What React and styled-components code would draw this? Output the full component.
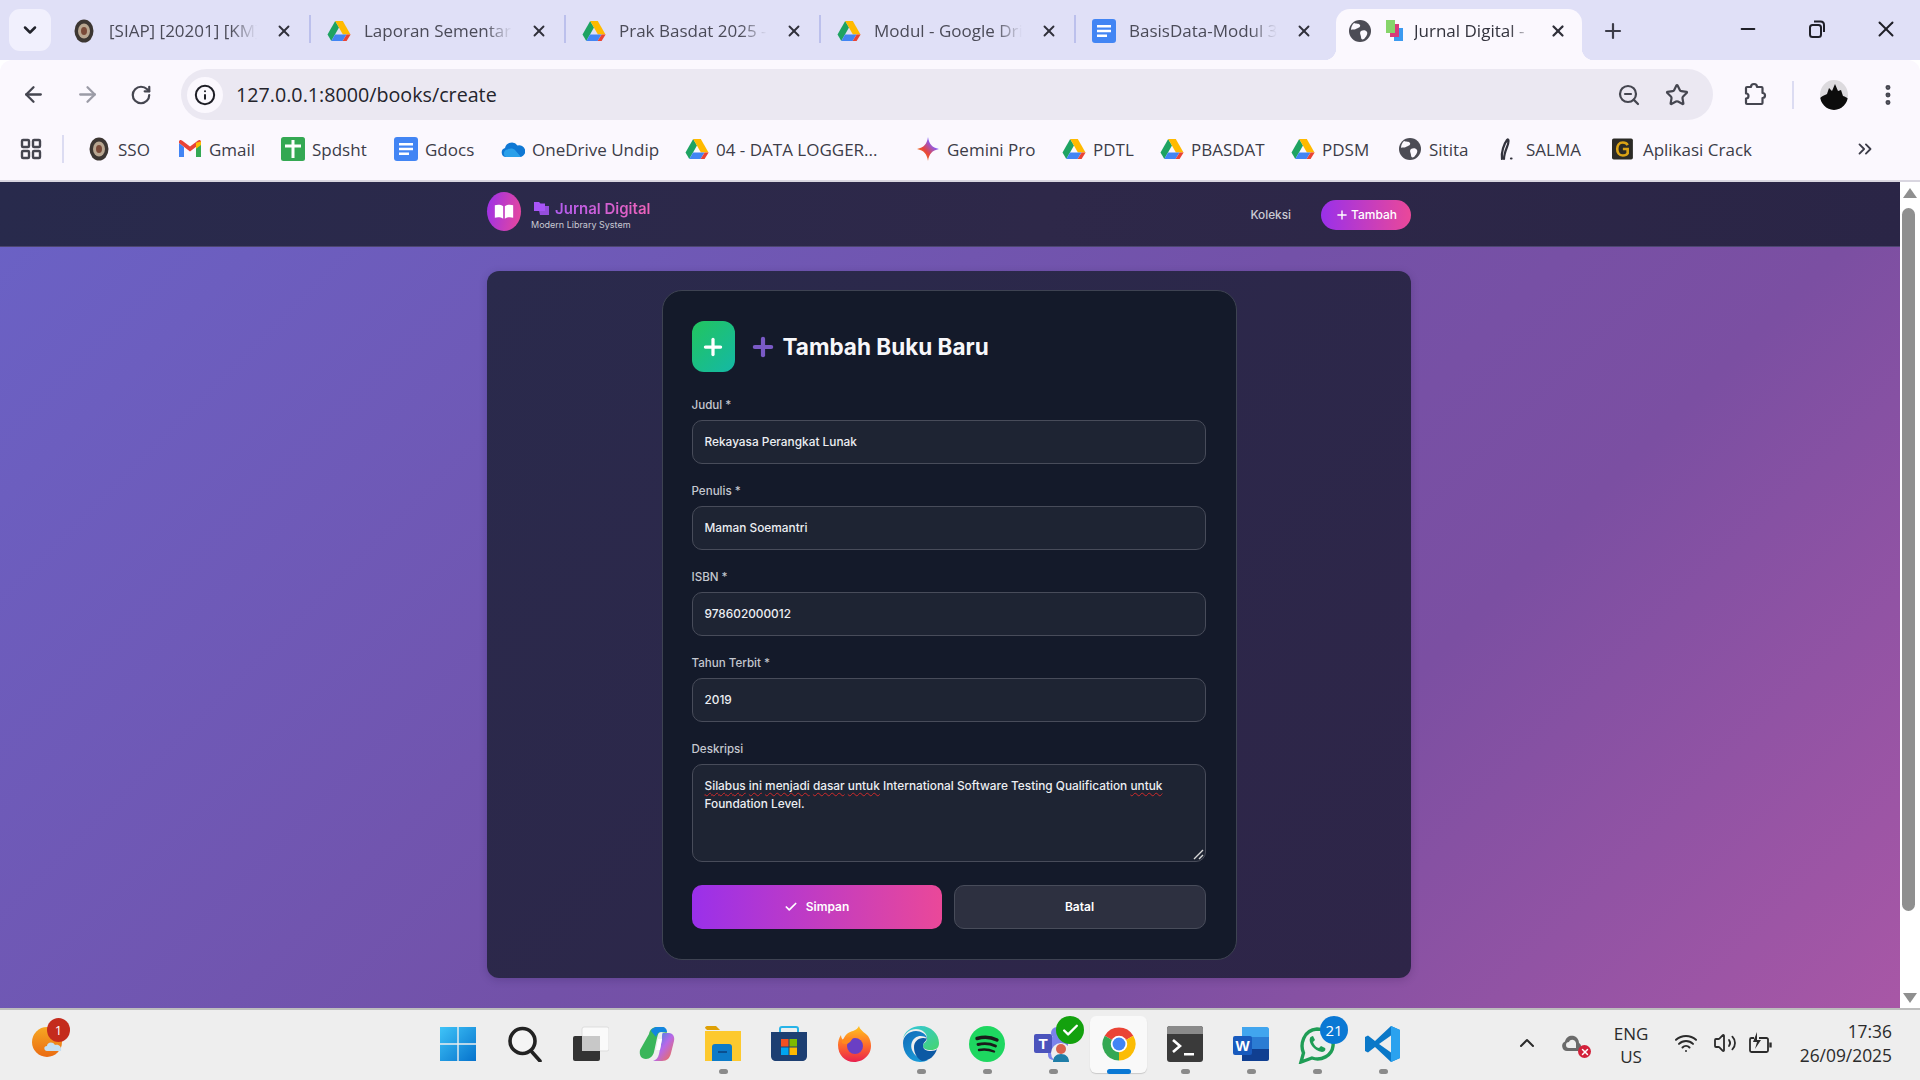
import React from 'react';
import styled, { createGlobalStyle } from 'styled-components';
import {
	ArrowLeft, ArrowRight, RotateCw, Info, ZoomOut, Star, EllipsisVertical,
	LayoutGrid, ChevronDown, ChevronUp, ChevronsRight, X, Plus, Minus, Check,
	Wifi, Volume2,
} from 'lucide-react';

const GlobalStyle = createGlobalStyle`
	html, body { margin: 0; padding: 0; }
	body { width: 1920px; height: 1080px; overflow: hidden; font-family: Inter, 'Liberation Sans', sans-serif; }
	* { box-sizing: border-box; }
`;

const chromeFont = `'Open Sans', 'Noto Sans', sans-serif`;

const Screen = styled.div`
	width: 1920px;
	height: 1080px;
	display: flex;
	flex-direction: column;
	overflow: hidden;
`;

/* browser chrome */
const TabStrip = styled.div`
	height: 60px;
	flex: none;
	display: flex;
	align-items: flex-end;
	padding-left: 9px;
	background: #e0e0f7;
`;
const TabListButton = styled.div`
	width: 42px;
	height: 42px;
	margin: 0 5px 9px 0;
	border-radius: 11px;
	background: #f1f0fd;
	display: flex;
	align-items: center;
	justify-content: center;
	color: #22232b;
`;
const Tab = styled.div`
	position: relative;
	width: 255px;
	height: 51px;
	padding: 0 18px 8px 16px;
	display: flex;
	align-items: center;
	font-family: ${chromeFont};
	font-size: 17px;
	color: #4b4b58;
	&::after {
		content: '';
		position: absolute;
		right: 0;
		top: 6px;
		height: 28px;
		width: 2px;
		background: ${(p) => (p.$sep ? '#bcc0ec' : 'transparent')};
	}
`;
const ActiveTab = styled.div`
	position: relative;
	width: 246px;
	height: 51px;
	margin-left: 5px;
	padding: 0 15px 8px 12px;
	display: flex;
	align-items: center;
	border-radius: 14px 14px 0 0;
	background: #fbf8fe;
	font-family: ${chromeFont};
	font-size: 17px;
	color: #33333d;
	&::before, &::after {
		content: '';
		position: absolute;
		bottom: 0;
		width: 12px;
		height: 12px;
	}
	&::before { left: -12px; background: radial-gradient(circle at 0 0, transparent 12px, #fbf8fe 12.5px); }
	&::after { right: -12px; background: radial-gradient(circle at 100% 0, transparent 12px, #fbf8fe 12.5px); }
`;
const TabTitle = styled.span`
	flex: 1;
	min-width: 0;
	margin-left: ${(p) => p.$gap || 13}px;
	white-space: nowrap;
	overflow: hidden;
	-webkit-mask-image: linear-gradient(90deg, #000 82%, transparent 100%);
	mask-image: linear-gradient(90deg, #000 82%, transparent 100%);
`;
const TabFavicon = styled.span`
	flex: none;
	display: flex;
	margin-right: ${(p) => p.$mr || 0}px;
`;
const TabClose = styled(X)`
	flex: none;
	margin-left: 18px;
	color: #30303a;
`;
const NewTab = styled.div`
	margin: 0 0 17px 19px;
	display: flex;
	color: #3c3c48;
`;
const WindowButtons = styled.div`
	margin-left: auto;
	display: flex;
	align-items: center;
	height: 100%;
	padding-bottom: 2px;
	color: #1f1f27;
`;
const WindowButton = styled.div`
	width: 69px;
	display: flex;
	justify-content: center;
`;

const Toolbar = styled.div`
	height: 60px;
	flex: none;
	display: flex;
	align-items: center;
	padding: 9px 0 0 6px;
	background: #fbf8fe;
	border-radius: 12px 12px 0 0;
`;
const NavIcon = styled.div`
	width: 54px;
	display: flex;
	justify-content: center;
	color: ${(p) => (p.$off ? '#9b9ba6' : '#454650')};
`;
const Omnibox = styled.div`
	width: 1532px;
	height: 51px;
	margin-left: 13px;
	padding: 0 12px 0 6px;
	display: flex;
	align-items: center;
	border-radius: 26px;
	background: #ebe8f2;
`;
const InfoChip = styled.div`
	width: 36px;
	height: 36px;
	border-radius: 50%;
	background: #fbf8fe;
	display: flex;
	align-items: center;
	justify-content: center;
	color: #1e1e26;
`;
const UrlText = styled.span`
	margin-left: 13px;
	flex: 1;
	font-family: ${chromeFont};
	font-size: 19.7px;
	color: #24242c;
`;
const OmniIcon = styled.div`
	width: 48px;
	display: flex;
	justify-content: center;
	color: #454650;
`;
const ExtensionSlot = styled(OmniIcon)`
	margin-left: 17px;
`;
const MenuSlot = styled(OmniIcon)`
	margin-left: 15px;
`;
const ToolDivider = styled.div`
	width: 2px;
	height: 28px;
	margin: 0 25px 0 14px;
	background: #dcdcf2;
`;

const BookmarkBar = styled.div`
	height: 62px;
	flex: none;
	display: flex;
	align-items: center;
	padding: 0 0 2px 19px;
	background: #fbf8fe;
	border-bottom: 2px solid #d9d6e0;
	font-family: ${chromeFont};
	font-size: 17px;
	color: #3c3c48;
`;
const BarDivider = styled.div`
	width: 2px;
	height: 28px;
	margin: 0 23px 0 19px;
	background: #dcdcf2;
`;
const Bookmark = styled.div`
	display: flex;
	align-items: center;
	gap: ${(p) => p.$gap || 7}px;
	width: ${(p) => p.$w}px;
	white-space: nowrap;
`;
const OverflowMark = styled.div`
	margin-left: auto;
	margin-right: 44px;
	display: flex;
	color: #3c3c48;
`;

/* page */
const Viewport = styled.div`
	height: 826px;
	flex: none;
	display: flex;
`;
const Page = styled.div`
	width: 1900px;
	background: linear-gradient(135deg, #6a62c6 0%, #7351a8 50%, #7b4fa2 70%, #a857a6 100%);
	overflow: hidden;
`;
const Scrollbar = styled.div`
	position: relative;
	width: 20px;
	background: #fff;
	padding-top: 26px;
`;
const ScrollArrow = styled.div`
	position: absolute;
	left: 3px;
	${(p) => (p.$down ? 'bottom: 5px;' : 'top: 6px;')}
	width: 0;
	height: 0;
	border-left: 7px solid transparent;
	border-right: 7px solid transparent;
	${(p) => (p.$down ? 'border-top: 10px solid #8f8f8f;' : 'border-bottom: 10px solid #8f8f8f;')}
`;
const ScrollThumb = styled.div`
	width: 13px;
	height: 703px;
	margin-left: 2px;
	border-radius: 7px;
	background: #8f8f8f;
`;
const NavBar = styled.header`
	height: 65px;
	background: linear-gradient(100deg, #282a4c 0%, #2e2849 55%, #2a2546 100%);
	border-bottom: 1px solid #4c4670;
`;
const Container = styled.div`
	width: 924px;
	margin-left: 487px;
`;
const NavInner = styled(Container)`
	display: flex;
	justify-content: space-between;
	padding-top: 10px;
`;
const Brand = styled.div`
	display: flex;
	gap: 10px;
`;
const LogoBadge = styled.div`
	width: 34px;
	height: 39px;
	border-radius: 50%;
	background: linear-gradient(100deg, #9a30ea, #ea4899);
	display: flex;
	align-items: center;
	justify-content: center;
`;
const BrandText = styled.div`
	display: flex;
	flex-direction: column;
	padding-top: 7px;
`;
const BrandTitle = styled.div`
	display: flex;
	align-items: center;
	gap: 6px;
	margin-left: 3px;
	height: 18px;
	font-size: 15px;
	font-weight: 600;
	span {
		background: linear-gradient(90deg, #b25cf0, #ee62b8);
		-webkit-background-clip: text;
		background-clip: text;
		color: transparent;
	}
`;
const BrandSub = styled.div`
	margin-top: 2px;
	font-size: 9px;
	color: #c9c9d4;
`;
const NavLinks = styled.nav`
	display: flex;
	align-items: center;
	gap: 30px;
	height: 30px;
	margin-top: 8px;
`;
const NavLink = styled.span`
	font-size: 11.8px;
	font-weight: 500;
	color: #cbcbd4;
`;
const AddPill = styled.div`
	width: 90px;
	height: 30px;
	padding-bottom: 1px;
	border-radius: 15px;
	background: linear-gradient(90deg, #9a30ea, #ea4899);
	display: flex;
	align-items: center;
	justify-content: center;
	gap: 2px;
	font-size: 12px;
	font-weight: 500;
	color: #fff;
`;
const Panel = styled(Container)`
	margin-top: 24px;
	height: 707px;
	padding-top: 19px;
	border-radius: 12px;
	background: linear-gradient(135deg, #2a2a4c 0%, #2e2548 100%);
	box-shadow: 0 2px 8px rgba(20, 10, 50, 0.18);
`;
const Card = styled.div`
	width: 575px;
	height: 670px;
	margin: 0 auto;
	padding: 30px 30px 0 29px;
	border: 1px solid #3e4352;
	border-radius: 20px;
	background: #141a2a;
`;
const CardHead = styled.div`
	display: flex;
	align-items: center;
	margin-bottom: 25px;
`;
const HeadIcon = styled.div`
	width: 43px;
	height: 51px;
	border-radius: 12px;
	background: linear-gradient(135deg, #22c55e, #14b8a6);
	display: flex;
	align-items: center;
	justify-content: center;
	color: #fff;
`;
const HeadPlus = styled(Plus)`
	margin: 0 6px 0 14px;
	color: #7a5ac6;
`;
const HeadTitle = styled.h1`
	margin: 0;
	font-size: 22.5px;
	font-weight: 700;
	color: #f7f7fa;
`;
const Field = styled.div`
	margin-bottom: 19px;
`;
const Label = styled.label`
	display: block;
	height: 16px;
	margin-bottom: 7px;
	font-size: 11.6px;
	font-weight: 500;
	line-height: 16px;
	color: #c4c7cf;
`;
const TextInput = styled.div`
	height: 44px;
	padding: 0 12px 1px;
	display: flex;
	align-items: center;
	border: 1px solid #484c5a;
	border-radius: 10px;
	background: #1e2433;
	font-size: 11.85px;
	font-weight: 500;
	color: #eceef2;
`;
const TextArea = styled.div`
	position: relative;
	height: 98px;
	padding: 12px 12px;
	border: 1px solid #484c5a;
	border-radius: 10px;
	background: #1e2433;
	font-size: 11.85px;
	font-weight: 500;
	line-height: 18px;
	color: #eceef2;
`;
const Misspelled = styled.span`
	text-decoration: underline wavy #d02a2a 1px;
	text-underline-offset: 2px;
`;
const ResizeGrip = styled.svg`
	position: absolute;
	right: 1px;
	bottom: 1px;
`;
const ButtonRow = styled.div`
	display: flex;
	gap: 12px;
	margin-top: 23px;
`;
const SaveButton = styled.div`
	flex: 1;
	height: 44px;
	padding-bottom: 1px;
	border-radius: 10px;
	background: linear-gradient(90deg, #9a30ea, #ea4899);
	display: flex;
	align-items: center;
	justify-content: center;
	gap: 8px;
	font-size: 12px;
	font-weight: 600;
	color: #fff;
`;
const CancelButton = styled.div`
	flex: 1;
	height: 44px;
	padding-bottom: 1px;
	border: 1px solid #484c5a;
	border-radius: 10px;
	background: #2d3040;
	display: flex;
	align-items: center;
	justify-content: center;
	font-size: 12px;
	font-weight: 600;
	color: #fff;
`;

/* taskbar */
const Taskbar = styled.footer`
	height: 72px;
	flex: none;
	display: flex;
	align-items: flex-start;
	background: #eeeeee;
	border-top: 2px solid #bdbdbd;
	font-family: ${chromeFont};
	color: #2b2b2b;
`;
const WeatherSlot = styled.div`
	position: relative;
	width: 424px;
	height: 70px;
	padding: 16px 0 0 31px;
`;
const WeatherBadge = styled.div`
	position: absolute;
	left: 47px;
	top: 8px;
	width: 23px;
	height: 24px;
	border-radius: 50%;
	background: #c42b1c;
	color: #fff;
	font-size: 13px;
	line-height: 24px;
	text-align: center;
`;
const Apps = styled.div`
	display: flex;
`;
const AppCell = styled.div`
	position: relative;
	width: ${(p) => p.$w}px;
	height: 70px;
	display: flex;
	justify-content: center;
	padding-top: 16px;
	&::before {
		content: '';
		display: ${(p) => (p.$active ? 'block' : 'none')};
		position: absolute;
		left: 4px;
		right: 5px;
		top: 6px;
		height: 57px;
		border-radius: 6px;
		background: #f9f9f9;
		box-shadow: 0 1px 1px #c9c9c9;
	}
	svg { position: relative; }
`;
const RunDot = styled.div`
	position: absolute;
	bottom: 6px;
	left: 50%;
	width: ${(p) => (p.$active ? '24px' : '9px')};
	height: 5px;
	margin-left: ${(p) => (p.$active ? '-12px' : '-4px')};
	border-radius: 3px;
	background: ${(p) => (p.$active ? '#0a78d4' : '#8a8a8a')};
`;
const AppBadge = styled.div`
	position: absolute;
	top: 6px;
	right: ${(p) => p.$r}px;
	width: 28px;
	height: 28px;
	border-radius: 50%;
	background: ${(p) => p.$bg};
	color: #fff;
	font-size: 15px;
	line-height: 28px;
	text-align: center;
	display: flex;
	align-items: center;
	justify-content: center;
`;
const Tray = styled.div`
	margin-left: 93px;
	height: 66px;
	display: flex;
	align-items: center;
`;
const TrayItem = styled.div`
	position: relative;
	width: ${(p) => p.$w}px;
	display: flex;
	justify-content: center;
	text-align: center;
	font-size: 17px;
	line-height: 23px;
`;
const LangItem = styled(TrayItem)`
	padding-top: 3px;
`;
const CloudX = styled.div`
	position: absolute;
	right: 10px;
	bottom: -3px;
	width: 13px;
	height: 13px;
	border-radius: 50%;
	background: #d3213a;
	color: #fff;
	display: flex;
	align-items: center;
	justify-content: center;
`;
const Clock = styled.div`
	width: 100px;
	margin-left: 9px;
	text-align: right;
	font-size: 17.4px;
	line-height: 24px;
`;

/* drawn icons */
const Drive = ({ s = 24 }) => (
	<svg width={s} height={s} viewBox="0 0 24 24">
		<path d="M8.2 2 0.5 15.5 4.3 22 12 8.5z" fill="#1ea362" />
		<path d="M8.2 2h7.6l7.7 13.5h-7.6z" fill="#ffba00" />
		<path d="M4.3 22h11.3l3.9-6.5H8z" fill="#4285f4" />
		<path d="M15.6 22h4l4-6.5h-4z" fill="#ea4335" />
	</svg>
);
const Docs = ({ s = 24 }) => (
	<svg width={s} height={s} viewBox="0 0 24 24">
		<rect x="0" y="0" width="24" height="24" rx="3" fill="#4285f4" />
		<path d="M5 6h14v2.600H5zM5 10.700h14v2.600H5zM5 15.400h10v2.600H5z" fill="#fff" />
	</svg>
);
const Sheets = ({ s = 24 }) => (
	<svg width={s} height={s} viewBox="0 0 24 24">
		<rect x="0" y="0" width="24" height="24" rx="2.500" fill="#34a853" />
		<path d="M4 7.500h6.500V3h3v4.500H20v3h-6.500V21h-3V10.500H4z" fill="#fff" />
	</svg>
);
const Gmail = ({ s = 24 }) => (
	<svg width={s} height={s} viewBox="0 0 24 24">
		<path d="M1 6v14h5V10z" fill="#4285f4" />
		<path d="M23 6v14h-5V10z" fill="#34a853" />
		<path d="M1 6l11 8.5L23 6v-1.500c0-1.500-2-2-3-1l-8 6-8-6c-1-1-3-.5-3 1z" fill="#ea4335" />
		<path d="M18 5.700 23 4.500V8l-5 3.800z" fill="#fbbc04" />
	</svg>
);
const OneDrive = ({ s = 24 }) => (
	<svg width={s} height={s} viewBox="0 0 24 24">
		<path d="M5 20a4.600 4.600 0 0 1-1-9A7 7 0 0 1 16.500 8.500 5.500 5.500 0 0 1 20 20z" fill="#0f78d4" />
		<path d="M5 20a4 4 0 0 1 1.500-7.500C9 11 12 11 14 13l6 7z" fill="#2aa0ea" />
	</svg>
);
const Gemini = ({ s = 24 }) => (
	<svg width={s} height={s} viewBox="0 0 24 24">
		<defs>
			<linearGradient id="gem" x1="0" y1="1" x2="1" y2="0">
				<stop offset="0" stopColor="#f5b400" />
				<stop offset="0.4" stopColor="#e8453c" />
				<stop offset="0.7" stopColor="#8a5cf0" />
				<stop offset="1" stopColor="#2f8cf5" />
			</linearGradient>
		</defs>
		<path d="M12 0c1 7 4 10.500 11 12-7 1.500-10 5-11 12-1-7-4-10.500-11-12 7-1.500 10-5 11-12z" fill="url(#gem)" />
	</svg>
);
const GlobeDark = ({ s = 24 }) => (
	<svg width={s} height={s} viewBox="0 0 24 24">
		<circle cx="12" cy="12" r="11" fill="#4c4c55" />
		<path d="M6 4c2 1 5 0 6 2s-2 3-4 4-4 0-5 1c0-3 1-5 3-7zM13 12c2-1 5-1 6 1s-1 5-3 7c-2 1-3 0-3-2s-2-4 0-6z" fill="#fbf8fe" />
	</svg>
);
const Seal = ({ s = 24 }) => (
	<svg width={s} height={s} viewBox="0 0 24 24">
		<ellipse cx="12" cy="12" rx="9.500" ry="11.500" fill="#3c3632" />
		<ellipse cx="12" cy="12" rx="6" ry="7.500" fill="#b8a690" />
		<ellipse cx="12" cy="12" rx="3" ry="4" fill="#7a4a38" />
	</svg>
);
const Salma = ({ s = 24 }) => (
	<svg width={s} height={s} viewBox="0 0 24 24" fill="none" stroke="#33333d" strokeWidth="2.200" strokeLinecap="round">
		<path d="M7 22c-1-7 2-15 5-19 2-2 2 2 0 7-2 5-3 8-3 12" />
		<path d="M16 21.500h.5" />
	</svg>
);
const Crack = ({ s = 24 }) => (
	<svg width={s} height={s} viewBox="0 0 24 24">
		<rect width="24" height="24" rx="2" fill="#2b2a26" />
		<path d="M18 7.500c-1-2-3-3-5.500-3C8 4.500 6 8 6 12s2 7.500 6.500 7.500c2.500 0 4.500-1 5.500-2.500v-5h-5.500" fill="none" stroke="#dba315" strokeWidth="3" />
	</svg>
);
const StackFavicon = () => (
	<svg width="18" height="24" viewBox="0 0 18 24">
		<rect x="8" y="9" width="9" height="13" fill="#3b9af0" />
		<rect x="4" y="5" width="9" height="13" fill="#d8397a" />
		<rect x="0" y="1" width="9" height="13" fill="#86d46a" />
	</svg>
);
const RestoreMark = () => (
	<svg width="20" height="20" viewBox="0 0 20 20" fill="none" stroke="currentColor" strokeWidth="2">
		<rect x="3" y="6" width="11" height="12" rx="2.500" />
		<path d="M7 2.500h6.500C15.500 2.500 17 4 17 6v7" />
	</svg>
);
const ExtensionMark = () => (
	<svg width="26" height="26" viewBox="0 0 26 26" fill="none" stroke="currentColor" strokeWidth="2.200" strokeLinejoin="round">
		<path d="M10 5a3 3 0 0 1 6 0h4.500a1 1 0 0 1 1 1v5a2.500 2.500 0 0 1 0 5v5a1 1 0 0 1-1 1H6a1 1 0 0 1-1-1v-4.500a2.500 2.500 0 0 0 0-5V6a1 1 0 0 1 1-1z" />
	</svg>
);
const ProfileMark = () => (
	<svg width="30" height="30" viewBox="0 0 30 30">
		<clipPath id="profile"><ellipse cx="15" cy="15" rx="14" ry="15" /></clipPath>
		<g clipPath="url(#profile)">
			<rect width="30" height="30" fill="#dcdade" />
			<path d="M0 19c3-3 6-4 8-5l2-6 3 3 3-7 3 7 3-1 2 6c3 1 4 2 6 3v11H0z" fill="#0c0c0c" />
		</g>
	</svg>
);
const BatteryMark = () => (
	<svg width="26" height="26" viewBox="0 0 26 26" fill="none" stroke="currentColor" strokeWidth="1.800" strokeLinejoin="round">
		<path d="M6 8H3.500A1.500 1.500 0 0 0 2 9.500v11A1.500 1.500 0 0 0 3.500 22h15a1.500 1.500 0 0 0 1.500-1.500v-11A1.500 1.500 0 0 0 18.500 8H11" />
		<path d="M22.500 12.500v5" strokeWidth="2.400" />
		<path d="M9 2 5 12h4l-2 7 6-9H9z" fill="currentColor" stroke="none" />
	</svg>
);
const BookMark = () => (
	<svg width="20" height="18" viewBox="0 0 24 20" fill="#fff">
		<path d="M11 3C8 1 4 1 1 2v15c3-1 7-1 10 1zM13 3c3-2 7-2 10-1v15c-3-1-7-1-10 1z" />
	</svg>
);
const BooksMark = () => (
	<svg width="15" height="13" viewBox="0 0 15 13" fill="#a855f7">
		<path d="M0 0h5l1.500 1.500H11V9H0z" />
		<path d="M4 4h11v9H6z" opacity="0.85" />
	</svg>
);
const Windows = () => (
	<svg width="36" height="36" viewBox="0 0 36 36">
		<defs>
			<linearGradient id="win" x1="0" y1="0" x2="1" y2="1">
				<stop offset="0" stopColor="#3fc4f8" />
				<stop offset="1" stopColor="#0672cc" />
			</linearGradient>
		</defs>
		<path d="M0 1h17.300v16.300H0zM18.700 1H36v16.300H18.700zM0 18.700h17.300V35H0zM18.700 18.700H36V35H18.700z" fill="url(#win)" />
	</svg>
);
const SearchMark = () => (
	<svg width="36" height="36" viewBox="0 0 36 36" fill="none" stroke="#222" strokeWidth="3.600" strokeLinecap="round">
		<circle cx="15.500" cy="15" r="12.500" fill="#f4f4f4" />
		<path d="M25 26l8 9" />
	</svg>
);
const TaskView = () => (
	<svg width="36" height="36" viewBox="0 0 36 36">
		<rect x="9" y="1" width="27" height="24" rx="2" fill="#fafafa" stroke="#ddd" />
		<rect x="0" y="10" width="27" height="25" rx="2" fill="#333" />
		<rect x="9" y="10" width="18" height="15" fill="#c8c8c8" />
	</svg>
);
const Copilot = () => (
	<svg width="36" height="36" viewBox="0 0 36 36">
		<defs>
			<linearGradient id="cop" x1="0" y1="0" x2="1" y2="1">
				<stop offset="0" stopColor="#1a8fe0" />
				<stop offset="0.5" stopColor="#b768e8" />
				<stop offset="1" stopColor="#f7703c" />
			</linearGradient>
		</defs>
		<path d="M10 8c1-5 4-7 8-7h5c3 0 4 3 5 6l-6-1c-3 0-3 3-4 6l-3 14c-1 4-4 7-8 7-5 0-7-4-6-9z" fill="#3ab65a" />
		<path d="M12 5c1-3 4-4 6-4h5c3 0 5 2 5 5h-6c-3 0-4 2-5 5z" fill="#1386e0" />
		<path d="M24 7h6c4 0 6 4 5 8l-3 12c-1 5-4 8-9 8h-9c3-1 5-3 6-7l3-15c0-3 0-6 1-6z" fill="url(#cop)" />
		<path d="M19 13h4l-2 11h-4z" fill="#fff" />
	</svg>
);
const Files = () => (
	<svg width="36" height="36" viewBox="0 0 36 36">
		<path d="M0 2c0-1 1-2 2-2h9l4 4H2z" fill="#dfa004" />
		<path d="M0 5h36v30H0z" fill="#fdc92e" />
		<path d="M7 21c0-2 1-3 3-3h14c2 0 3 1 3 3v14H7z" fill="#0d7bc8" />
		<path d="M13 25h9v2h-9z" fill="#0a4f8f" />
	</svg>
);
const Store = () => (
	<svg width="36" height="36" viewBox="0 0 36 36">
		<path d="M9 6V3c0-1 1-2 2-2h14c1 0 2 1 2 2v3" fill="none" stroke="#27b4e8" strokeWidth="2" />
		<path d="M0 6h36v24c0 3-2 5-5 5H5c-3 0-5-2-5-5z" fill="#1d3f72" />
		<rect x="10" y="13" width="7.500" height="7.500" fill="#f25022" />
		<rect x="18.500" y="13" width="7.500" height="7.500" fill="#7fba00" />
		<rect x="10" y="21.500" width="7.500" height="7.500" fill="#00a4ef" />
		<rect x="18.500" y="21.500" width="7.500" height="7.500" fill="#ffb900" />
	</svg>
);
const Firefox = () => (
	<svg width="36" height="36" viewBox="0 0 36 36">
		<defs>
			<linearGradient id="ffx" x1="0.5" y1="0" x2="0.5" y2="1">
				<stop offset="0" stopColor="#ffc51e" />
				<stop offset="0.55" stopColor="#ff6a2b" />
				<stop offset="1" stopColor="#e8214f" />
			</linearGradient>
		</defs>
		<path d="M22 0c1 4 5 6 9 10 4 6 4 14 0 19-4 5-9 7-14 7C8 36 1 29 1 19c0-4 1-7 3-10 0 2 1 4 2 5 2-5 5-8 10-9 3-1 5-3 6-5z" fill="url(#ffx)" />
		<circle cx="18" cy="20" r="8" fill="#6a3fc4" />
		<path d="M5 14c3-3 8-3 11-2l-3 4c-2 2-5 3-8 1z" fill="#ff8a1e" />
	</svg>
);
const Edge = () => (
	<svg width="36" height="36" viewBox="0 0 36 36">
		<defs>
			<linearGradient id="edg" x1="0" y1="0" x2="1" y2="1">
				<stop offset="0" stopColor="#33c6e0" />
				<stop offset="1" stopColor="#45d56f" />
			</linearGradient>
			<linearGradient id="edb" x1="0" y1="0" x2="0.6" y2="1">
				<stop offset="0" stopColor="#0f6ab8" />
				<stop offset="1" stopColor="#1a9ad8" />
			</linearGradient>
		</defs>
		<path d="M18 0c10 0 18 8 18 17 0 5-3 7-8 7-6 0-8-2-8-4 0-4 4-3 4-8 0-5-5-9-11-9-6 0-11 4-13 10C1 6 8 0 18 0z" fill="url(#edg)" />
		<path d="M0 17C0 10 6 5 13 5c5 0 10 3 11 7-3-2-8-3-12 0-4 3-5 9-2 14 2 4 8 8 15 8-2 1-5 2-8 2C7 36 0 27 0 17z" fill="url(#edb)" />
		<path d="M11 21c0-5 4-9 9-9 2 0 3 1 4 0-1 4-4 4-4 8 0 3 3 5 8 5 3 0 5-1 6-2-2 7-8 12-15 12-6-3-8-9-8-14z" fill="#0c59a4" />
	</svg>
);
const Spotify = () => (
	<svg width="36" height="36" viewBox="0 0 36 36" fill="none" stroke="#1a1a1a" strokeLinecap="round">
		<circle cx="18" cy="18" r="18" fill="#1ed760" stroke="none" />
		<path d="M8 12.500c7-2 14-1.500 20 1.500" strokeWidth="3.400" />
		<path d="M9 18.500c6-1.500 12-1 17.500 1.500" strokeWidth="2.900" />
		<path d="M10 24c5-1 10-.6 15 1.500" strokeWidth="2.400" />
	</svg>
);
const Teams = () => (
	<svg width="38" height="38" viewBox="0 0 38 38">
		<circle cx="23" cy="7" r="6" fill="#7b83eb" />
		<rect x="14" y="11" width="20" height="23" rx="5" fill="#7b83eb" />
		<rect x="0" y="8" width="18" height="19" rx="2" fill="#4b53bc" />
		<text x="9" y="23" textAnchor="middle" fontFamily="Liberation Sans" fontSize="15" fontWeight="700" fill="#fff">T</text>
		<circle cx="27" cy="27" r="10" fill="#eee" />
		<path d="M19 36c0-5 3-8 8-8s8 3 8 8z" fill="#1f7ea8" />
		<circle cx="27" cy="23" r="5" fill="#d8614e" />
	</svg>
);
const ChromeMark = () => (
	<svg width="36" height="36" viewBox="0 0 24 24">
		<path d="M12 12 2.470 6.500A11 11 0 0 1 21.530 6.500z" fill="#ea4335" />
		<path d="M12 12 21.530 6.500A11 11 0 0 1 12 23z" fill="#fbbc04" />
		<path d="M12 12 12 23A11 11 0 0 1 2.470 6.500z" fill="#34a853" />
		<circle cx="12" cy="12" r="5.500" fill="#fff" />
		<circle cx="12" cy="12" r="4.300" fill="#4285f4" />
	</svg>
);
const Terminal = () => (
	<svg width="36" height="36" viewBox="0 0 36 36">
		<rect width="36" height="36" rx="3" fill="#3a3a3a" />
		<path d="M0 3c0-2 1-3 3-3h30c2 0 3 1 3 3v5H0z" fill="#8a8a8a" />
		<path d="M6 14l7 6-7 6" fill="none" stroke="#fff" strokeWidth="2.600" />
		<path d="M17 27h10v2.500H17z" fill="#fff" />
	</svg>
);
const Word = () => (
	<svg width="36" height="36" viewBox="0 0 36 36">
		<path d="M9 1h25c1 0 2 1 2 2v8H9z" fill="#41a5ee" />
		<path d="M9 11h27v12H9z" fill="#2b7cd3" />
		<path d="M9 23h27v10c0 1-1 2-2 2H9z" fill="#103f91" />
		<rect x="0" y="10" width="19" height="19" rx="2" fill="#185abd" />
		<text x="9.500" y="25" textAnchor="middle" fontFamily="Liberation Sans" fontSize="15" fontWeight="700" fill="#fff">W</text>
	</svg>
);
const WhatsApp = () => (
	<svg width="38" height="38" viewBox="0 0 38 38" fill="none" stroke="#1f9d55" strokeWidth="3.400">
		<path d="M3 36l2.500-9C2 19 5 4 19 3c12 0 17 9 16 17-1 10-12 15-21 12z" />
		<path d="M12 12c-2 4 4 13 12 14 3 0 4-3 3-4l-4-2-2 2c-2 0-5-3-6-6l2-2-2-4c-1 0-3 1-3 2z" fill="#1f9d55" stroke="none" />
	</svg>
);
const VSCode = () => (
	<svg width="36" height="36" viewBox="0 0 36 36">
		<path d="M26 0 35 4v28l-9 4-16-15-7 5.500L0 25V11l3-1.500L10 15z" fill="#0a78c8" />
		<path d="M26 0 35 4v28l-9 4z" fill="#2aa2ef" />
		<path d="M26 9.500v17L14 18z" fill="#eeeeee" />
	</svg>
);
const Weather = () => (
	<svg width="36" height="36" viewBox="0 0 36 36">
		<defs>
			<linearGradient id="sun" x1="0" y1="0" x2="0" y2="1">
				<stop offset="0" stopColor="#f7a823" />
				<stop offset="1" stopColor="#ea6b12" />
			</linearGradient>
		</defs>
		<ellipse cx="16" cy="16" rx="15" ry="15" fill="url(#sun)" />
		<path d="M16 25c-3 0-4-5 0-5 0-4 6-5 8-1 4-1 7 2 6 6z" fill="#c5dff2" />
	</svg>
);
const CloudTray = () => (
	<svg width="24" height="24" viewBox="0 0 24 24">
		<path d="M6 20a5 5 0 0 1-2-9.500C5 6 9 4 13 5c3 1 5 4 5 7 3 1 3 8-1 8z" fill="#6a6a6a" />
		<path d="M8 17a3 3 0 0 1 0-6c1-3 6-3 7 1v5z" fill="#eee" />
	</svg>
);

const tabs = [
	{ icon: <Seal />, title: '[SIAP] [20201] [KM]', sep: true },
	{ icon: <Drive />, title: 'Laporan Sementara', sep: true },
	{ icon: <Drive />, title: 'Prak Basdat 2025 - ', sep: true },
	{ icon: <Drive />, title: 'Modul - Google Drive', sep: true },
	{ icon: <Docs />, title: 'BasisData-Modul 3', sep: false },
];

const bookmarks = [
	{ icon: <Seal />, label: 'SSO', w: 91 },
	{ icon: <Gmail />, label: 'Gmail', w: 103 },
	{ icon: <Sheets />, label: 'Spdsht', w: 113 },
	{ icon: <Docs />, label: 'Gdocs', w: 107 },
	{ icon: <OneDrive />, label: 'OneDrive Undip', w: 184 },
	{ icon: <Drive />, label: '04 - DATA LOGGER...', w: 231 },
	{ icon: <Gemini />, label: 'Gemini Pro', w: 146 },
	{ icon: <Drive />, label: 'PDTL', w: 98 },
	{ icon: <Drive />, label: 'PBASDAT', w: 131 },
	{ icon: <Drive />, label: 'PDSM', w: 107 },
	{ icon: <GlobeDark />, label: 'Sitita', w: 97 },
	{ icon: <Salma />, label: 'SALMA', w: 117 },
	{ icon: <Crack />, label: 'Aplikasi Crack', w: 140, gap: 10 },
];

const apps = [
	{ icon: <Windows />, w: 68 },
	{ icon: <SearchMark /> },
	{ icon: <TaskView /> },
	{ icon: <Copilot /> },
	{ icon: <Files />, dot: true },
	{ icon: <Store /> },
	{ icon: <Firefox /> },
	{ icon: <Edge />, dot: true },
	{ icon: <Spotify />, dot: true },
	{ icon: <Teams />, dot: true, badge: <Check size={19} strokeWidth={3} />, badgeBg: '#13a10e', badgeR: 2 },
	{ icon: <ChromeMark />, active: true },
	{ icon: <Terminal />, dot: true },
	{ icon: <Word />, dot: true },
	{ icon: <WhatsApp />, dot: true, badge: '21', badgeBg: '#0a78d4', badgeR: 2 },
	{ icon: <VSCode />, dot: true },
];

const fields = [
	{ label: 'Judul *', value: 'Rekayasa Perangkat Lunak' },
	{ label: 'Penulis *', value: 'Maman Soemantri' },
	{ label: 'ISBN *', value: '978602000012' },
	{ label: 'Tahun Terbit *', value: '2019' },
];

const App = () => {
	return (
		<Screen>
			<GlobalStyle />
			<TabStrip>
				<TabListButton><ChevronDown size={20} strokeWidth={3} /></TabListButton>
				{tabs.map((t) => (
					<Tab key={t.title} $sep={t.sep}>
						<TabFavicon>{t.icon}</TabFavicon>
						<TabTitle>{t.title}</TabTitle>
						<TabClose size={18} strokeWidth={2.5} />
					</Tab>
				))}
				<ActiveTab>
					<TabFavicon $mr={14}><GlobeDark /></TabFavicon>
					<TabFavicon><StackFavicon /></TabFavicon>
					<TabTitle $gap={10}>Jurnal Digital - </TabTitle>
					<TabClose size={18} strokeWidth={3} />
				</ActiveTab>
				<NewTab><Plus size={24} strokeWidth={2.2} /></NewTab>
				<WindowButtons>
					<WindowButton><Minus size={22} strokeWidth={2} /></WindowButton>
					<WindowButton><RestoreMark /></WindowButton>
					<WindowButton><X size={26} strokeWidth={1.8} /></WindowButton>
				</WindowButtons>
			</TabStrip>

			<Toolbar>
				<NavIcon><ArrowLeft size={25} strokeWidth={2.2} /></NavIcon>
				<NavIcon $off><ArrowRight size={25} strokeWidth={2.2} /></NavIcon>
				<NavIcon><RotateCw size={22} strokeWidth={2.4} /></NavIcon>
				<Omnibox>
					<InfoChip><Info size={22} strokeWidth={2.2} /></InfoChip>
					<UrlText>127.0.0.1:8000/books/create</UrlText>
					<OmniIcon><ZoomOut size={24} strokeWidth={2.2} /></OmniIcon>
					<OmniIcon><Star size={24} strokeWidth={2.2} /></OmniIcon>
				</Omnibox>
				<ExtensionSlot><ExtensionMark /></ExtensionSlot>
				<ToolDivider />
				<ProfileMark />
				<MenuSlot><EllipsisVertical size={26} strokeWidth={2.6} /></MenuSlot>
			</Toolbar>

			<BookmarkBar>
				<LayoutGrid size={24} strokeWidth={2.4} color="#454650" />
				<BarDivider />
				{bookmarks.map((b) => (
					<Bookmark key={b.label} $w={b.w} $gap={b.gap}>{b.icon}{b.label}</Bookmark>
				))}
				<OverflowMark><ChevronsRight size={22} strokeWidth={2} /></OverflowMark>
			</BookmarkBar>

			<Viewport>
				<Page>
					<NavBar>
						<NavInner>
							<Brand>
								<LogoBadge><BookMark /></LogoBadge>
								<BrandText>
									<BrandTitle><BooksMark /><span>Jurnal Digital</span></BrandTitle>
									<BrandSub>Modern Library System</BrandSub>
								</BrandText>
							</Brand>
							<NavLinks>
								<NavLink>Koleksi</NavLink>
								<AddPill><Plus size={14} strokeWidth={2.4} />Tambah</AddPill>
							</NavLinks>
						</NavInner>
					</NavBar>
					<Panel>
						<Card>
							<CardHead>
								<HeadIcon><Plus size={26} strokeWidth={3} /></HeadIcon>
								<HeadPlus size={28} strokeWidth={3.6} />
								<HeadTitle>Tambah Buku Baru</HeadTitle>
							</CardHead>
							{fields.map((f) => (
								<Field key={f.label}>
									<Label>{f.label}</Label>
									<TextInput>{f.value}</TextInput>
								</Field>
							))}
							<Label>Deskripsi</Label>
							<TextArea>
								<Misspelled>Silabus</Misspelled> <Misspelled>ini</Misspelled> <Misspelled>menjadi</Misspelled> <Misspelled>dasar</Misspelled> <Misspelled>untuk</Misspelled> International Software Testing Qualification <Misspelled>untuk</Misspelled> Foundation Level.
								<ResizeGrip width="12" height="12" viewBox="0 0 12 12" stroke="#d8d8d8" strokeWidth="1.400">
									<path d="M2 11 11 2M7 11l4-4" />
								</ResizeGrip>
							</TextArea>
							<ButtonRow>
								<SaveButton><Check size={14} strokeWidth={3} />Simpan</SaveButton>
								<CancelButton>Batal</CancelButton>
							</ButtonRow>
						</Card>
					</Panel>
				</Page>
				<Scrollbar>
					<ScrollArrow />
					<ScrollThumb />
					<ScrollArrow $down />
				</Scrollbar>
			</Viewport>

			<Taskbar>
				<WeatherSlot>
					<Weather />
					<WeatherBadge>1</WeatherBadge>
				</WeatherSlot>
				<Apps>
					{apps.map((a, i) => (
						<AppCell key={i} $active={a.active} $w={a.w || 66}>
							{a.icon}
							{(a.dot || a.active) && <RunDot $active={a.active} />}
							{a.badge && <AppBadge $bg={a.badgeBg} $r={a.badgeR}>{a.badge}</AppBadge>}
						</AppCell>
					))}
				</Apps>
				<Tray>
					<TrayItem $w={36}><ChevronUp size={24} strokeWidth={2} /></TrayItem>
					<TrayItem $w={56}><CloudTray /><CloudX><X size={10} strokeWidth={3.5} /></CloudX></TrayItem>
					<LangItem $w={60}>ENG<br />US</LangItem>
					<TrayItem $w={50}><Wifi size={24} strokeWidth={2} /></TrayItem>
					<TrayItem $w={28}><Volume2 size={24} strokeWidth={1.8} /></TrayItem>
					<TrayItem $w={44}><BatteryMark /></TrayItem>
					<Clock>17:36<br />26/09/2025</Clock>
				</Tray>
			</Taskbar>
		</Screen>
	);
};

export default App;
